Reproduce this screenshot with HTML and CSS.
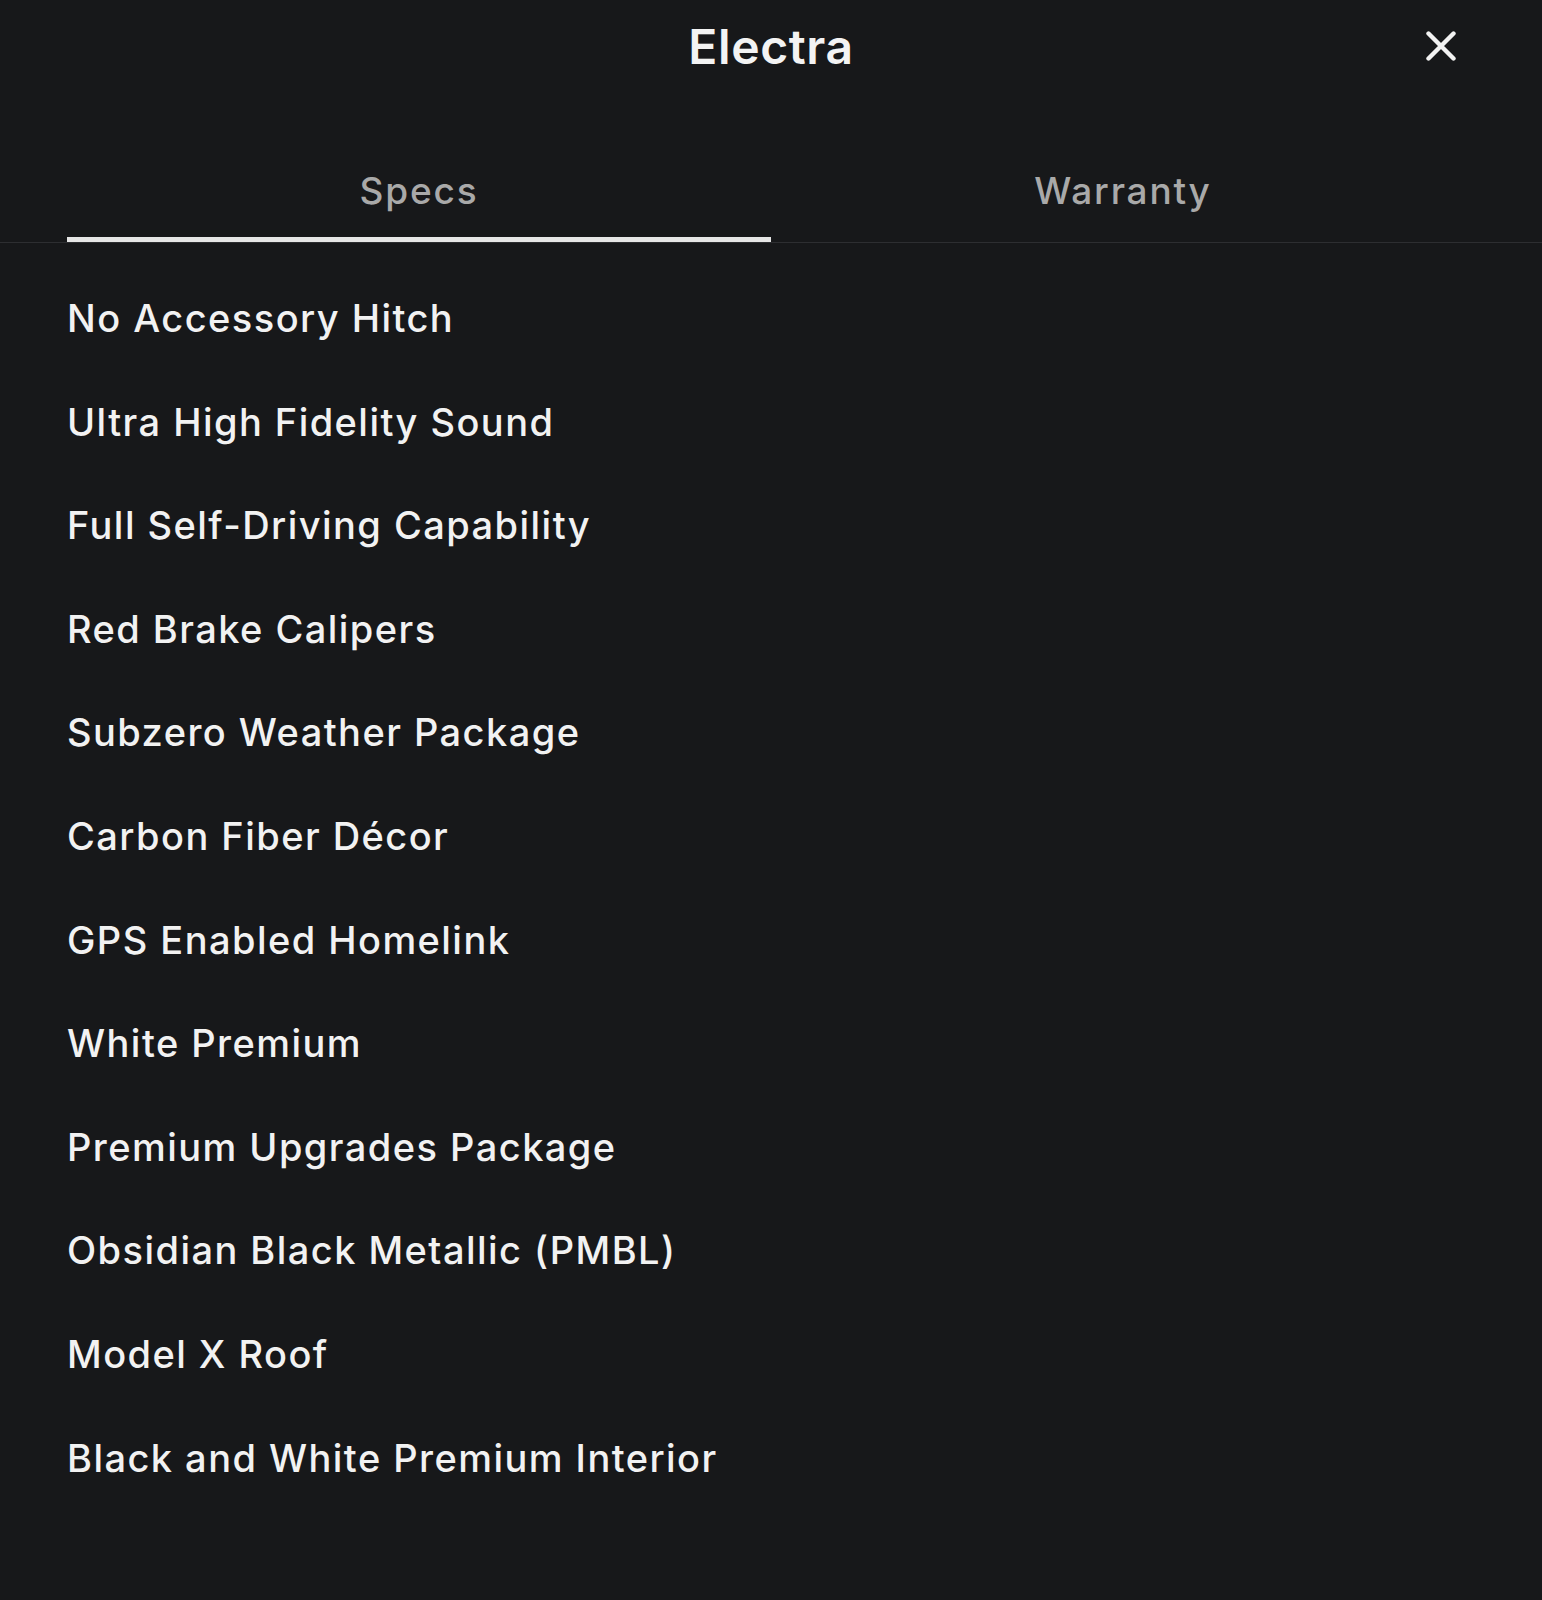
FILE: index.html
```html
<!DOCTYPE html>
<html lang="en">
<head>
<meta charset="utf-8">
<title>Electra</title>
<link rel="stylesheet" href="styles.css">
</head>
<body>
<div class="sheet">
  <header class="header">
    <span class="spacer"></span>
    <h1 class="title">Electra</h1>
    <button class="close" aria-label="Close">
      <svg width="30" height="30" viewBox="0 0 30 30" fill="none" stroke="#f2f2f2" stroke-width="4.4" stroke-linecap="round">
        <path d="M2.5 2.5 L27.5 27.5 M27.5 2.5 L2.5 27.5"/>
      </svg>
    </button>
  </header>
  <nav class="tabs">
    <div class="tab active">Specs</div>
    <div class="tab">Warranty</div>
  </nav>
  <ul class="specs">
    <li>No Accessory Hitch</li>
    <li>Ultra High Fidelity Sound</li>
    <li>Full Self-Driving Capability</li>
    <li>Red Brake Calipers</li>
    <li>Subzero Weather Package</li>
    <li>Carbon Fiber Décor</li>
    <li>GPS Enabled Homelink</li>
    <li>White Premium</li>
    <li>Premium Upgrades Package</li>
    <li>Obsidian Black Metallic (PMBL)</li>
    <li>Model X Roof</li>
    <li>Black and White Premium Interior</li>
  </ul>
</div>
</body>
</html>
```
FILE: styles.css
```css
html, body {
  margin: 0;
  padding: 0;
  background: #17181a;
}
body {
  font-family: Inter, "Noto Sans", "DejaVu Sans", sans-serif;
  color: #f0f0f0;
  min-height: 1600px;
}
.sheet {
  width: 1542px;
}
.header {
  display: grid;
  grid-template-columns: 1fr auto 1fr;
  height: 94px;
}
.title {
  margin: 0;
  font-size: 48px;
  font-weight: 600;
  line-height: 94px;
  color: #f3f3f3;
  letter-spacing: 0.6px;
}
.close {
  justify-self: end;
  align-self: start;
  margin: 31px 86px 0 0;
  padding: 0;
  width: 30px;
  height: 30px;
  background: none;
  border: 0;
  display: flex;
}
.tabs {
  display: flex;
  padding: 0 67px;
  border-bottom: 1px solid #2d2e31;
}
.tab {
  flex: 1;
  text-align: center;
  font-size: 37px;
  font-weight: 500;
  line-height: 44px;
  letter-spacing: 1.8px;
  color: #a9a9a9;
  padding: 75px 0 24px;
  border-bottom: 5px solid transparent;
}
.tab.active {
  border-bottom-color: #e6e6e6;
}
.specs {
  list-style: none;
  margin: 0;
  padding: 24px 0 0 67px;
}
.specs li {
  font-size: 38px;
  font-weight: 500;
  line-height: 103.6px;
  letter-spacing: 1.45px;
  color: #f2f2f2;
}
```
